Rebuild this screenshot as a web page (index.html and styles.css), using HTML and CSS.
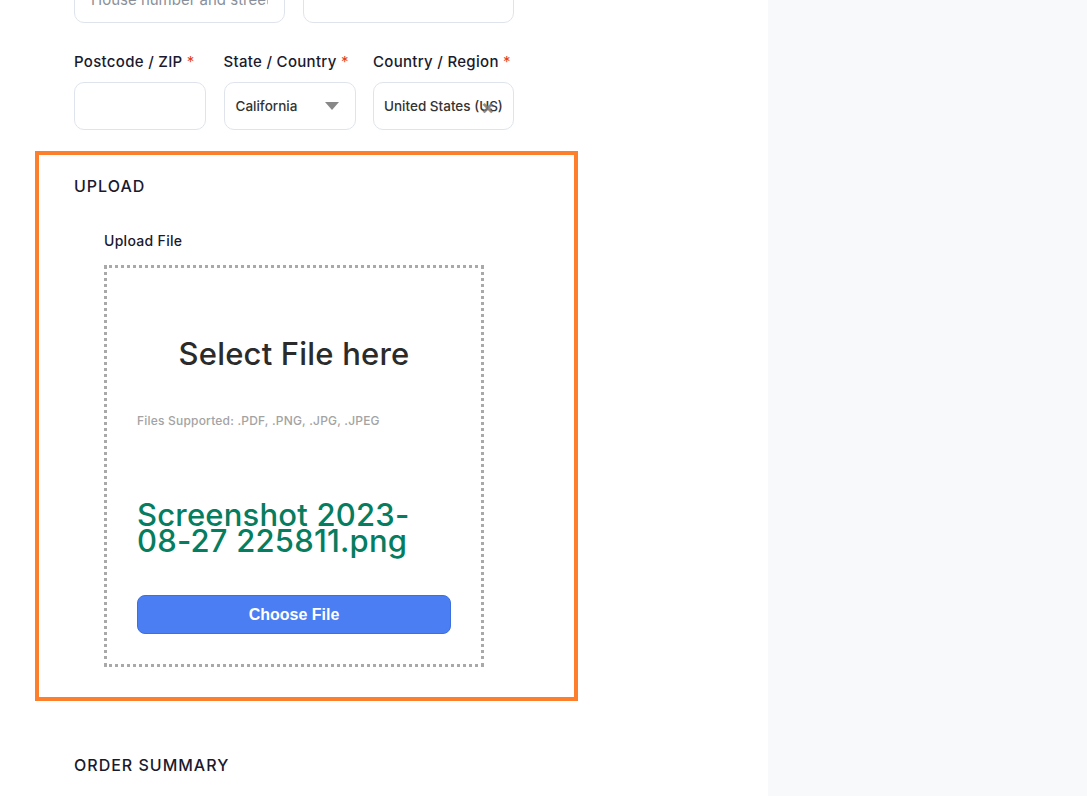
FILE: index.html
```html
<!DOCTYPE html>
<html lang="en">
  <head>
    <meta charset="utf-8" />
    <title>Checkout</title>
    <meta name="viewport" content="width=device-width, initial-scale=1" />
    <link rel="stylesheet" href="styles.css">
  </head>
  <body>
    <div class="page">
      <main class="checkout">
        <section class="fields">
          <div class="form-row street-row">
            <input type="text" class="field" placeholder="House number and street name" />
            <input type="text" class="field" />
          </div>
          <div class="form-row address-row">
            <div class="form-col">
              <label>Postcode / ZIP <abbr>*</abbr></label>
              <input type="text" class="field" />
            </div>
            <div class="form-col">
              <label>State / Country <abbr>*</abbr></label>
              <div class="field select">
                <span>California</span>
                <span class="caret"></span>
              </div>
            </div>
            <div class="form-col">
              <label>Country / Region <abbr>*</abbr></label>
              <div class="field select country">
                <span>United States (US)</span>
                <span class="clear">&times;</span>
              </div>
            </div>
          </div>
        </section>

        <section class="upload">
          <h3>UPLOAD</h3>
          <div class="upload-field">
            <label>Upload File</label>
            <div class="dropzone">
              <h2>Select File here</h2>
              <p class="supported">Files Supported: .PDF, .PNG, .JPG, .JPEG</p>
              <p class="file-name">Screenshot 2023-<br />08-27 225811.png</p>
              <button type="button" class="choose">Choose File</button>
            </div>
          </div>
        </section>

        <section class="summary">
          <h3>ORDER SUMMARY</h3>
        </section>
      </main>
      <aside class="sidebar"></aside>
    </div>
  </body>
</html>
```

FILE: styles.css
```css
body {
  margin: 0;
  font-family: "Inter", "Lato", sans-serif;
  color: #1a1a2e;
  background: #fff;
}
.page {
  display: grid;
  grid-template-columns: 768px 1fr;
  height: 796px;
  overflow: hidden;
}
.sidebar {
  background-color: #f8f9fb;
}
.checkout {
  padding-left: 39px;
  width: 535px;
}
.fields {
  padding: 0 35px;
  margin-top: -25px;
}
.form-row {
  display: grid;
  column-gap: 18px;
}
.street-row {
  grid-template-columns: 211px 211px;
}
.address-row {
  grid-template-columns: 132px 132px 141px;
  column-gap: 17.5px;
  margin-top: 29px;
}
.form-col {
  display: flex;
  flex-direction: column;
}
.form-col label {
  font-size: 15px;
  font-weight: 500;
  line-height: 20px;
  margin-bottom: 10px;
  white-space: nowrap;
  letter-spacing: 0.3px;
}
.form-col abbr {
  color: #e2401c;
  text-decoration: none;
  font-weight: 400;
}
.field {
  box-sizing: border-box;
  height: 48px;
  width: 100%;
  margin: 0;
  border: 1px solid #dfe4ec;
  border-radius: 10px;
  background: #fff;
  padding: 0 16px;
  font-family: inherit;
  font-size: 15px;
}
.field::placeholder {
  color: #8a8f99;
}
.select {
  display: flex;
  align-items: center;
  justify-content: space-between;
  padding: 0 16px 0 11px;
  font-size: 13.5px;
  font-weight: 500;
  color: #333;
}
.country {
  position: relative;
  padding-left: 10px;
  white-space: nowrap;
}
.caret {
  width: 0;
  height: 0;
  border-left: 7px solid transparent;
  border-right: 7px solid transparent;
  border-top: 8px solid #888;
}
.clear {
  position: absolute;
  left: 107px;
  top: 12px;
  font-size: 20px;
  font-weight: 700;
  color: #777;
  opacity: 0.85;
}
.upload {
  outline: 4px solid #fd7f2c;
  margin-top: 25px;
  padding: 20px 35px 30px;
}
h3 {
  margin: 0;
  font-size: 16px;
  font-weight: 500;
  line-height: 22px;
  letter-spacing: 1px;
}
.upload-field {
  margin-top: 35px;
  padding-left: 30px;
}
.upload-field label {
  display: block;
  font-size: 14px;
  font-weight: 500;
  line-height: 18px;
  margin-bottom: 15px;
  letter-spacing: 0.3px;
}
.dropzone {
  width: 380px;
  height: 402px;
  box-sizing: border-box;
  border: 3px dotted #a9a9a9;
  padding: 30px;
  display: flex;
  flex-direction: column;
}
.dropzone h2 {
  margin: 38px 0 0;
  text-align: center;
  font-size: 31px;
  font-weight: 500;
  line-height: 36px;
  color: #2b2b2b;
  letter-spacing: 0.2px;
}
.supported {
  margin: 41px 0 0;
  font-size: 12px;
  font-weight: 500;
  line-height: 16px;
  color: #a3a3a3;
  letter-spacing: 0.2px;
}
.file-name {
  margin: 73px 0 0;
  font-size: 31px;
  font-weight: 500;
  line-height: 26px;
  color: #077d5f;
  letter-spacing: 0.2px;
}
.choose {
  margin-top: 41px;
  height: 40px;
  width: 100%;
  border: 1px solid #3d6fe0;
  border-radius: 8px;
  background-color: #4a7ef2;
  color: #fff;
  font-family: "Liberation Sans", Arial, sans-serif;
  font-size: 16px;
  font-weight: 700;
}
.summary {
  margin-top: 57px;
  padding: 0 35px;
}
```
